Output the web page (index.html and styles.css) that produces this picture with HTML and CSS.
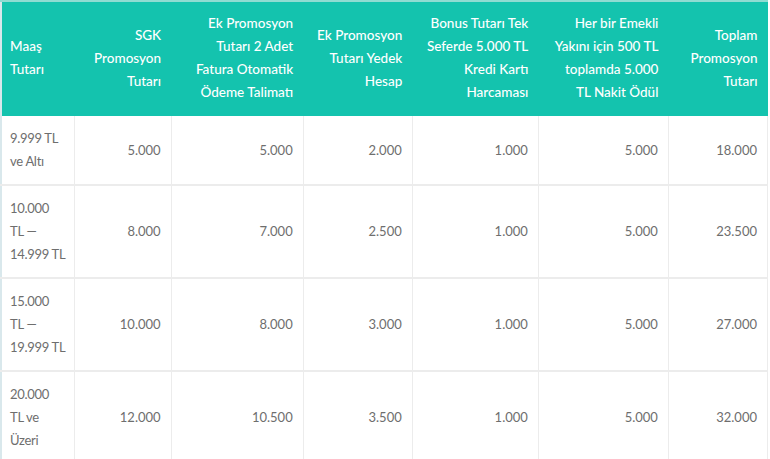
FILE: index.html
```html
<!DOCTYPE html>
<html lang="tr">
<head>
<meta charset="utf-8">
<link rel="stylesheet" href="styles.css">
</head>
<body>
<table class="promo">
  <colgroup>
    <col class="c1"><col class="c2"><col class="c3"><col class="c4"><col class="c5"><col class="c6"><col class="c7">
  </colgroup>
  <thead>
    <tr>
      <th class="left">Maaş<br>Tutarı</th>
      <th>SGK<br>Promosyon<br>Tutarı</th>
      <th>Ek Promosyon<br>Tutarı 2 Adet<br>Fatura Otomatik<br>Ödeme Talimatı</th>
      <th>Ek Promosyon<br>Tutarı Yedek<br>Hesap</th>
      <th>Bonus Tutarı Tek<br>Seferde 5.000 TL<br>Kredi Kartı<br>Harcaması</th>
      <th>Her bir Emekli<br>Yakını için 500 TL<br>toplamda 5.000<br>TL Nakit Ödül</th>
      <th>Toplam<br>Promosyon<br>Tutarı</th>
    </tr>
  </thead>
  <tbody>
    <tr>
      <td class="left">9.999 TL<br>ve Altı</td>
      <td>5.000</td><td>5.000</td><td>2.000</td><td>1.000</td><td>5.000</td><td>18.000</td>
    </tr>
    <tr>
      <td class="left">10.000<br>TL —<br>14.999 TL</td>
      <td>8.000</td><td>7.000</td><td>2.500</td><td>1.000</td><td>5.000</td><td>23.500</td>
    </tr>
    <tr>
      <td class="left">15.000<br>TL —<br>19.999 TL</td>
      <td>10.000</td><td>8.000</td><td>3.000</td><td>1.000</td><td>5.000</td><td>27.000</td>
    </tr>
    <tr>
      <td class="left">20.000<br>TL ve<br>Üzeri</td>
      <td>12.000</td><td>10.500</td><td>3.500</td><td>1.000</td><td>5.000</td><td>32.000</td>
    </tr>
  </tbody>
</table>
</body>
</html>
```

FILE: styles.css
```css
html, body {
  margin: 0;
  padding: 0;
  background: #ffffff;
}
.promo {
  border-collapse: collapse;
  table-layout: fixed;
  width: 768px;
  font-family: Lato, "Open Sans", sans-serif;
  font-size: 13.5px;
  line-height: 23px;
  border-left: 2px solid #d9e8ec;
  border-top: 2px solid #8fdcd2;
}
.c1 { width: 73px; }
.c2 { width: 97px; }
.c3 { width: 132px; }
.c4 { width: 109px; }
.c5 { width: 126px; }
.c6 { width: 130px; }
.c7 { width: 99px; }
.promo th {
  background: #14c3ae;
  color: #ffffff;
  font-weight: 500;
  text-align: right;
  vertical-align: middle;
  padding: 10px 10px 12px 10px;
  height: 92px;
  white-space: nowrap;
}
.promo td {
  color: #6e6e6e;
  font-size: 13px;
  text-align: right;
  vertical-align: middle;
  padding: 11px 10px;
  white-space: nowrap;
  border-left: 1px solid #ececec;
  border-right: 1px solid #ececec;
  border-bottom: 2px solid #ececec;
}
.promo td.left, .promo th.left {
  text-align: left;
  padding-left: 8px;
}
.promo td.left { border-left: none; letter-spacing: -0.3px; }
.promo tbody tr:first-child td { height: 45px; }
.promo tbody tr:last-child td { border-bottom: none; }
```
